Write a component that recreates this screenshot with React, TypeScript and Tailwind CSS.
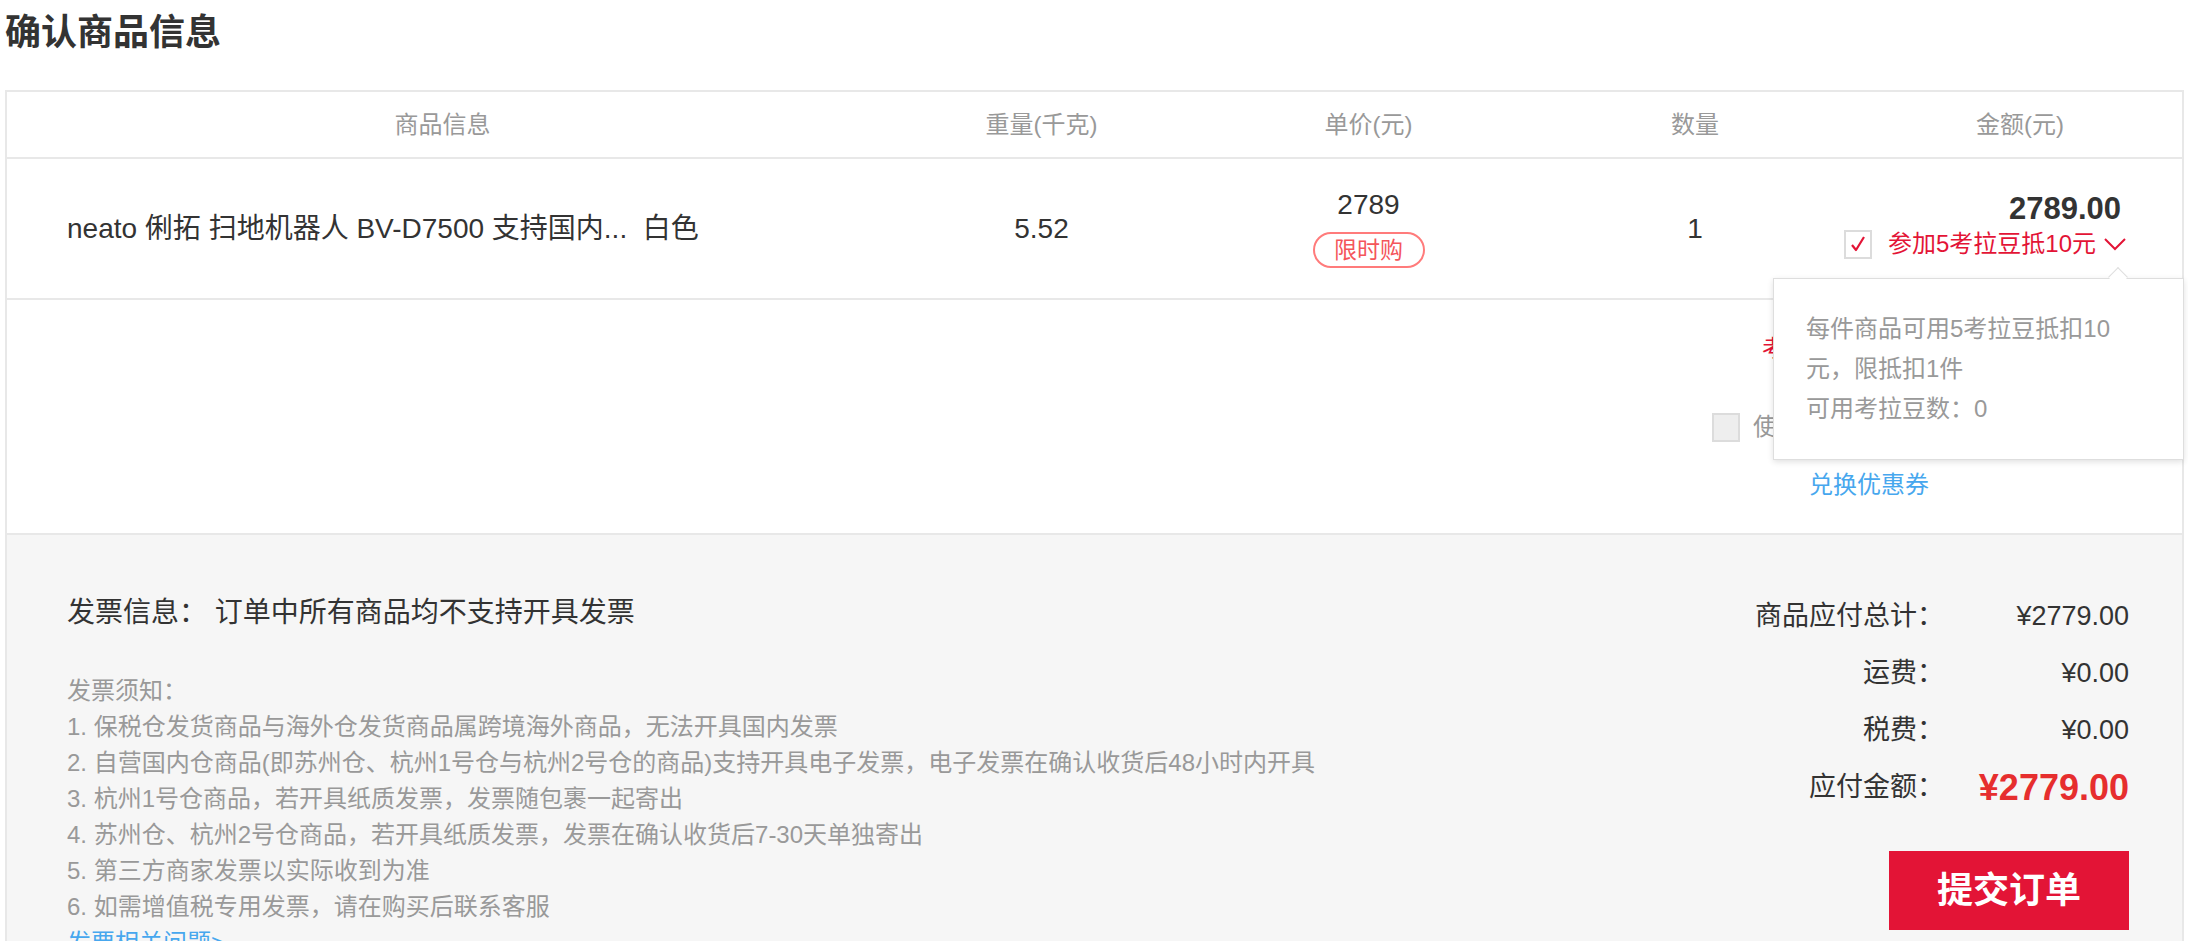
import React from 'react';

// small red check box used by the koala-bean option
const CheckBox = ({ checked }: { checked: boolean }) => (
  <span
    className={
      checked
        ? 'flex h-[29px] w-[28px] shrink-0 items-center justify-center border-2 border-[#dcdcdc] bg-white'
        : 'flex h-[29px] w-[28px] shrink-0 items-center justify-center border-2 border-[#dcdcdc] bg-[#eeeeee]'
    }
  >
    {checked && (
      <svg width="18" height="18" viewBox="0 0 18 18">
        <path d="M3 10 L7 15 L15 2" fill="none" stroke="#e31436" strokeWidth="2.2" strokeLinejoin="round" />
      </svg>
    )}
  </span>
);

const notices = [
  '1. 保税仓发货商品与海外仓发货商品属跨境海外商品，无法开具国内发票',
  '2. 自营国内仓商品(即苏州仓、杭州1号仓与杭州2号仓的商品)支持开具电子发票，电子发票在确认收货后48小时内开具',
  '3. 杭州1号仓商品，若开具纸质发票，发票随包裹一起寄出',
  '4. 苏州仓、杭州2号仓商品，若开具纸质发票，发票在确认收货后7-30天单独寄出',
  '5. 第三方商家发票以实际收到为准',
  '6. 如需增值税专用发票，请在购买后联系客服',
];

const summary = [
  { label: '商品应付总计：', value: '¥2779.00' },
  { label: '运费：', value: '¥0.00' },
  { label: '税费：', value: '¥0.00' },
];

const App = () => {
  return (
    <div className="min-h-screen bg-white font-['Liberation_Sans','Noto_Sans_CJK_SC',sans-serif] text-[#333]">
      <h2 className="pl-[5px] pt-[12px] text-[36px] font-bold leading-[42px] text-[#333]">确认商品信息</h2>

      <div className="relative ml-[5px] mt-[36px] w-[2179px] border-2 border-[#e8e8e8]">
        {/* table header */}
        <div className="grid h-[67px] grid-cols-[871px_327px_327px_326px_1fr] items-center border-b-2 border-[#e8e8e8] text-center text-[24px] text-[#999]">
          <div>商品信息</div>
          <div>重量(千克)</div>
          <div>单价(元)</div>
          <div>数量</div>
          <div>金额(元)</div>
        </div>

        {/* product row */}
        <div className="grid h-[141px] grid-cols-[871px_327px_327px_326px_1fr] items-center border-b-2 border-[#e8e8e8] text-[28px]">
          <div className="pl-[60px]">neato 俐拓 扫地机器人 BV-D7500 支持国内...&nbsp; 白色</div>
          <div className="text-center">5.52</div>
          <div className="flex flex-col items-center">
            <div className="leading-[32px]">2789</div>
            <span className="mt-[11px] flex h-[36px] w-[112px] items-center justify-center rounded-full border-2 border-[#ff7b7b] text-[23px] leading-none text-[#f4555a]">
              限时购
            </span>
          </div>
          <div className="text-center">1</div>
          <div className="-ml-[100px] flex flex-col items-end pb-[6px] pr-[56px]">
            <div className="mr-[5px] text-[31px] font-bold leading-[32px]">2789.00</div>
            <div className="mt-[5px] flex h-[29px] items-center whitespace-nowrap">
              <CheckBox checked />
              <span className="ml-[16px] text-[24px] leading-none text-[#e31436]">参加5考拉豆抵10元</span>
              <svg className="ml-[8px] shrink-0" width="22" height="13" viewBox="0 0 22 13">
                <path d="M1 1 L11 11 L21 1" fill="none" stroke="#e31436" strokeWidth="2" />
              </svg>
            </div>
          </div>
        </div>

        {/* discounts */}
        <div className="flex h-[235px] justify-end border-b-2 border-[#e8e8e8]">
          <div className="w-[470px] pt-[33px]">
            <div className="pl-[50px] text-[24px] leading-[32px] text-[#e31436]">考拉豆抵扣：-¥10.00</div>
            <div className="mt-[47px] flex h-[30px] items-center">
              <CheckBox checked={false} />
              <span className="ml-[13px] text-[24px] text-[#999]">使用优惠券</span>
            </div>
            <div className="mt-[27px] pl-[97px] text-[24px] leading-[32px] text-[#47a7ee]">兑换优惠券</div>
          </div>
        </div>

        {/* koala bean tip */}
        <div className="absolute left-[1766px] top-[186px] w-[411px] border border-[#dedede] bg-white pb-[30px] pl-[32px] pt-[30px] text-[24px] leading-[40px] text-[#999] shadow-[0_2px_6px_rgba(0,0,0,0.12)]">
          <span className="absolute left-[337px] top-[-9px] h-[14px] w-[14px] rotate-45 border-l border-t border-[#dedede] bg-white" />
          每件商品可用5考拉豆抵扣10
          <br />
          元，限抵扣1件
          <br />
          可用考拉豆数：0
        </div>

        {/* invoice + totals */}
        <div className="flex justify-between bg-[#f6f6f6] pb-[40px]">
          <div className="pl-[60px] pt-[60px]">
            <div className="text-[28px] leading-[36px] text-[#333]">发票信息：&nbsp;订单中所有商品均不支持开具发票</div>
            <div className="mt-[42px] text-[24px] leading-[36px] text-[#999]">
              <div>发票须知：</div>
              {notices.map((n) => (
                <div key={n}>{n}</div>
              ))}
              <div className="text-[#47a7ee]">发票相关问题&gt;</div>
            </div>
          </div>

          <div className="flex flex-col items-end pr-[53px] pt-[53px]">
            {summary.map((s) => (
              <div key={s.label} className="flex h-[57px] items-center text-[27px]">
                <span className="text-right">{s.label}</span>
                <span className="w-[185px] text-right">{s.value}</span>
              </div>
            ))}
            <div className="flex h-[57px] items-center">
              <span className="text-right text-[27px]">应付金额：</span>
              <span className="w-[185px] text-right text-[36px] font-bold text-[#e62e2e]">¥2779.00</span>
            </div>
            <button className="mt-[35px] flex h-[79px] w-[240px] items-center justify-center bg-[#e31436] text-[36px] font-bold text-white">
              提交订单
            </button>
          </div>
        </div>
      </div>
    </div>
  );
};

export default App;
